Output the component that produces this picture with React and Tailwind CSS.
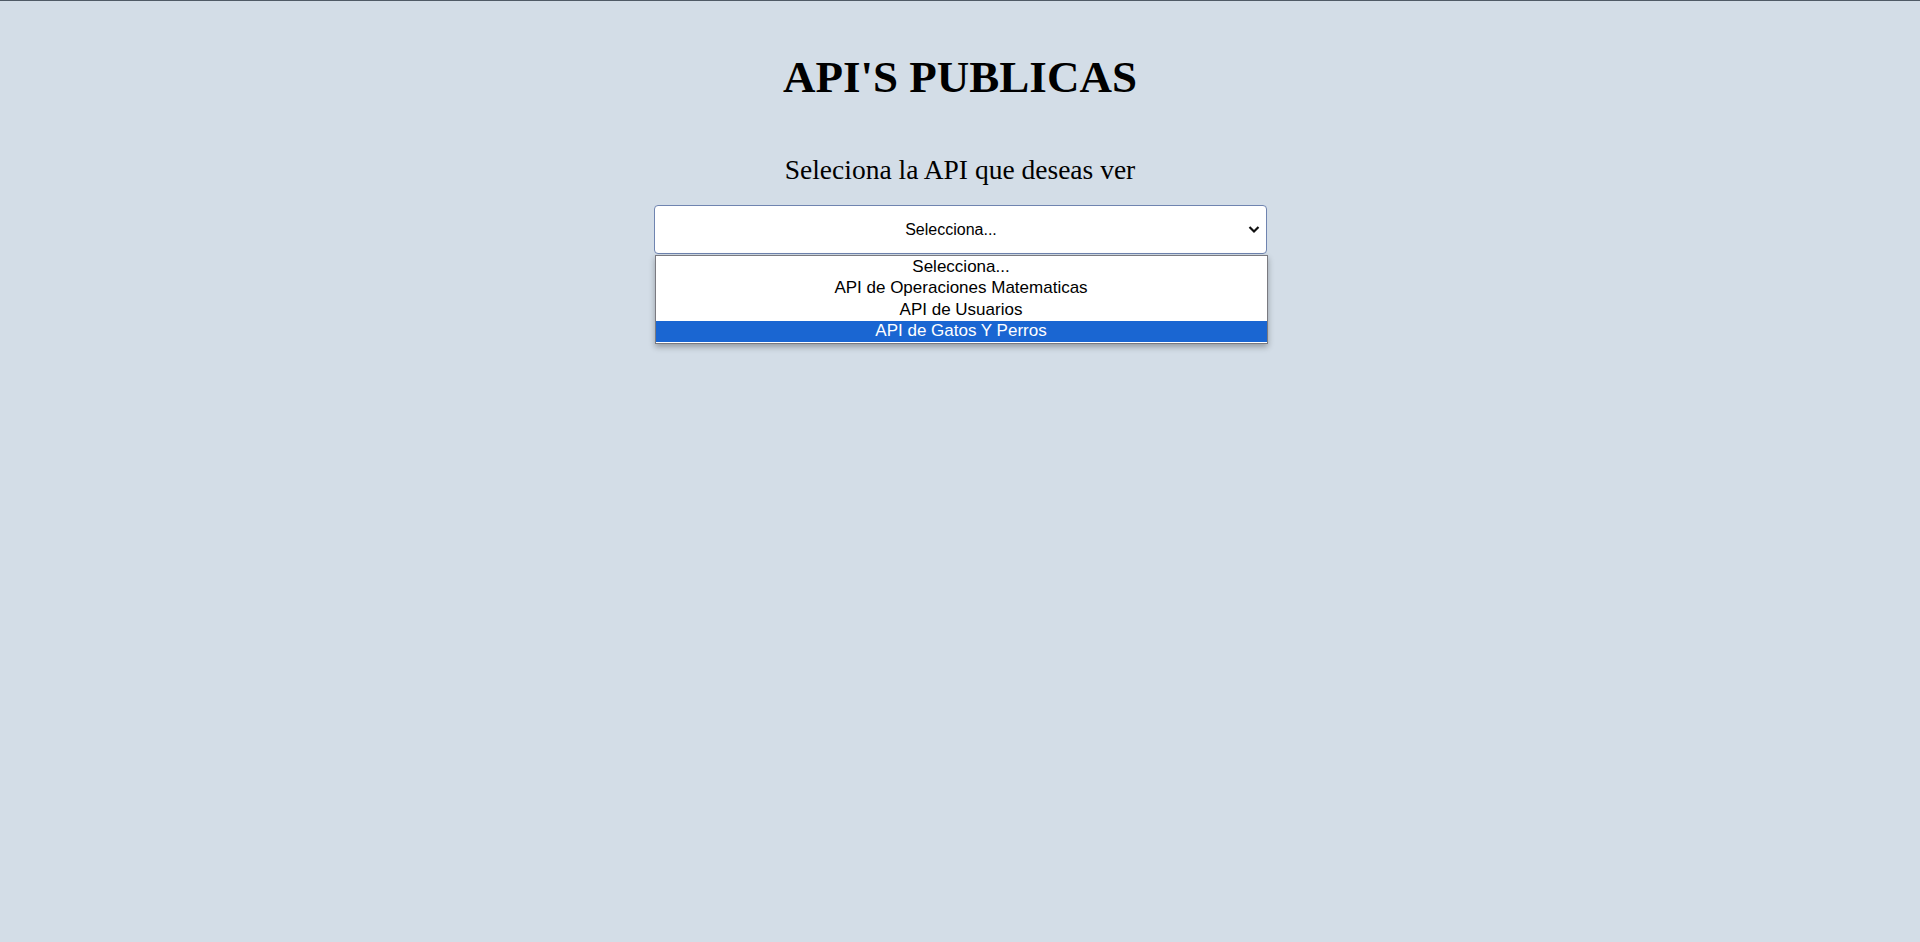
export default function App() {
  const options = [
    "Selecciona...",
    "API de Operaciones Matematicas",
    "API de Usuarios",
    "API de Gatos Y Perros",
  ];
  return (
    <div className="min-h-[942px] w-full bg-[#d3dde7] border-t border-[#4f5a66]" style={{ fontFamily: '"Liberation Serif", "Times New Roman", serif' }}>
      <div className="flex flex-col items-center pt-[51px]">
        <h1 className="text-[45px] leading-[50px] font-bold text-black">API'S PUBLICAS</h1>
        <h2 className="mt-[52px] text-[27.5px] leading-[31px] text-black">Seleciona la API que deseas ver</h2>
        <div className="relative mt-[20px] w-[613px]">
          <div
            className="relative flex h-[49px] items-center justify-center rounded-[4px] border border-[#6f84b0] bg-white pr-[18px] text-[16px] text-black"
            style={{ fontFamily: '"Liberation Sans", Arial, sans-serif' }}
          >
            <span>Selecciona...</span>
            <svg className="absolute right-[6px] top-[19px]" width="12" height="9" viewBox="0 0 12 9">
              <path d="M1.5 2 L6 6.5 L10.5 2" fill="none" stroke="#111" strokeWidth="2.2" />
            </svg>
          </div>
          <div
            className="absolute left-[1px] top-[50px] w-[613px] border border-[#7a7a80] bg-white pb-[1px] shadow-[0_3px_6px_rgba(0,0,0,0.3)]"
            style={{ fontFamily: '"Liberation Sans", Arial, sans-serif' }}
          >
            {options.map((o, i) => (
              <div
                key={o}
                className={
                  i === 3
                    ? "flex h-[21.5px] items-center justify-center bg-[#1a66d2] pb-[1px] text-[17px] leading-[19px] text-white"
                    : "flex h-[21.5px] items-center justify-center pb-[1px] text-[17px] leading-[19px] text-black"
                }
              >
                {o}
              </div>
            ))}
          </div>
        </div>
      </div>
    </div>
  );
}
